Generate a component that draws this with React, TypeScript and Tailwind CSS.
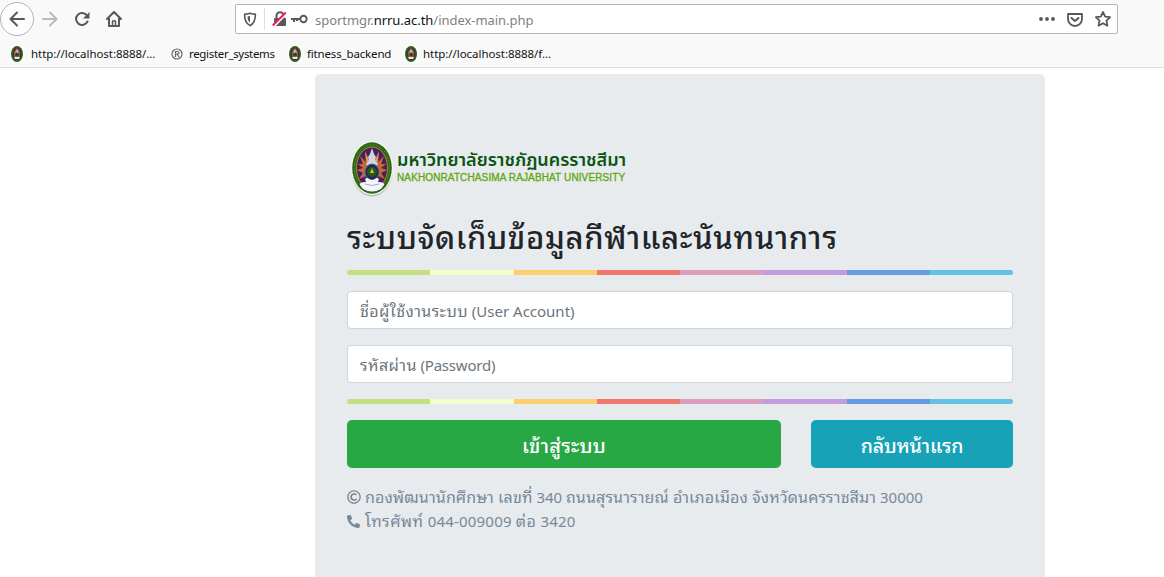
import React from 'react';
import { FaPhone, FaRegCopyright } from 'react-icons/fa';

function Crest({ className }: { className: string }) {
  return (
    <svg viewBox="0 0 42 56" className={className}>
      <ellipse cx="21" cy="29" rx="20.5" ry="26.5" fill="#b9bdb9" />
      <ellipse cx="21" cy="27" rx="21" ry="27" fill="#f4faee" />
      <ellipse cx="21" cy="27" rx="19.8" ry="25.8" fill="#2c6417" />
      <ellipse cx="21" cy="27" rx="17.6" ry="23.2" fill="none" stroke="#60a22b" strokeWidth="1" strokeDasharray="1.3 1.2" />
      <ellipse cx="21" cy="27" rx="15.6" ry="21" fill="#46205f" stroke="#c28b2b" strokeWidth=".9" />
      <path d="M21 27 9 15l3 8-5 0 5 4-6 2 6 3-4 6 7-3 6 3 6-3 7 3-4-6 6-3-6-2 5-4h-5l3-8z" fill="#c96a35" />
      <path d="M21 26 14 10l1 11zM21 26l7-16-1 11z" fill="#e99a47" />
      <path d="m21 7 2 6 2 3-1 3 3 4-2 3h-8l-2-3 3-4-1-3 2-3z" fill="#d5d6e5" />
      <ellipse cx="21" cy="31" rx="7" ry="8" fill="#2a2350" stroke="#4a5f9a" strokeWidth="1.2" />
      <circle cx="21" cy="31" r="5" fill="#20591f" />
      <path d="m21 27 2 5h-4z" fill="#e1b72c" />
      <path d="M14 38q2-2 4 0 3 2 6 0 2-2 4 0l-1 3q7 0 6 3l-3 4q-9 5-18 0l-3-4q-1-3 6-3z" fill="#f6f4fc" />
      <path d="M14 43q7 3 14 0" fill="none" stroke="#9b91bd" strokeWidth=".8" />
    </svg>
  );
}

function MiniCrest() {
  return (
    <svg viewBox="0 0 14 16" className="h-4 w-3.5 shrink-0">
      <rect width="14" height="16" fill="#fff" />
      <ellipse cx="7" cy="8" rx="6" ry="8" fill="#2d6119" />
      <ellipse cx="7" cy="8" rx="4.2" ry="6" fill="#4d214f" />
      <path d="M4 8q0-4 3-5 3 1 3 5l-1 4H5z" fill="#bd602d" />
      <path d="M6 5 7 2l1 3 1 2H5z" fill="#bcb7ce" />
      <circle cx="7" cy="8.5" r="2" fill="#294837" />
      <path d="M4 11h6l-1 2H5z" fill="#e8e5ee" />
    </svg>
  );
}

const stripes = ['bg-[#c4e17f]', 'bg-[#f7fdca]', 'bg-[#fecf71]', 'bg-[#f0776c]', 'bg-[#db9dbe]', 'bg-[#c49cde]', 'bg-[#669ae1]', 'bg-[#62c2e4]'];

function Rainbow() {
  return (
    <div className="flex h-[5px] w-full overflow-hidden rounded-[5px]">
      {stripes.map((c) => <div key={c} className={`flex-1 ${c}`} />)}
    </div>
  );
}

function Thai({ children }: { children: string }) {
  return <span className="text-[16px] tracking-[0.12px]">{children}</span>;
}

function Field({ thai, latin, tracking }: { thai: string; latin: string; tracking: string }) {
  return (
    <div role="textbox" className="mt-4 flex h-[38px] w-full items-center rounded border border-[#ced4da] bg-white px-3 pt-px text-[15px] text-[#6c757d]">
      <div className="whitespace-pre leading-6"><span className="text-[16px] tracking-[0.4px]">{thai}</span><span className={tracking}>{' ' + latin}</span></div>
    </div>
  );
}

function Toolbar() {
  return (
    <div className="flex h-[38px] items-center text-[#58585a]">
      <div className="flex h-[34px] w-[34px] shrink-0 items-center justify-center rounded-full border border-[#b4b4b4] bg-[#fdfdfd]">
        <svg viewBox="0 0 16 16" className="h-4 w-4" fill="none" stroke="currentColor" strokeWidth="2" strokeLinecap="round" strokeLinejoin="round"><path d="M15 8H1.5M8 1.5 1.5 8 8 14.500" /></svg>
      </div>
      <svg viewBox="0 0 16 16" className="ml-2 h-4 w-4 text-[#bababb]" fill="none" stroke="currentColor" strokeWidth="2" strokeLinecap="round" strokeLinejoin="round"><path d="M1 8h13.500M8 1.500 14.500 8 8 14.500" /></svg>
      <svg viewBox="0 0 16 16" className="ml-4 h-4 w-4" fill="none" stroke="currentColor" strokeWidth="2" strokeLinecap="round"><path d="M13.500 10.500A6 6 0 1 1 13 4.500" /><path d="M15.500 1v6.500H9z" fill="currentColor" stroke="none" /></svg>
      <svg viewBox="0 0 16 16" className="ml-4 h-4 w-4" fill="none" stroke="currentColor" strokeWidth="2" strokeLinecap="round" strokeLinejoin="round"><path d="m1 8 7-7 7 7M3 7v8h10V7" /><path d="M6.500 15v-5h3v5" strokeWidth="1.500" /></svg>
      <div className="ml-[113px] flex h-[30px] w-[883px] items-center rounded-[2px] border border-[#b7b7b7] bg-white">
        <svg viewBox="0 0 14 15" className="ml-[7px] h-[15px] w-3.5" fill="none" stroke="currentColor"><path d="M7 1.200q2.500.9 5 .9.400.1.400.6c0 6-1.400 8.800-5.400 10.900C3 11.500 1.600 8.700 1.600 2.700q0-.5.400-.6 2.500 0 5-.9Z" strokeWidth="1.600" /><path d="M7 4v6.700C5.300 9.300 4.600 7.500 4.500 4.500z" fill="currentColor" stroke="none" /></svg>
        <div className="ml-[7px] h-[22px] w-px bg-[#dfdfdf]" />
        <svg viewBox="0 0 15 16" className="ml-[7px] h-4 w-[15px]"><path d="M4.500 7V4.700a3.500 3.500 0 0 1 7 0V7" fill="none" stroke="#58585a" strokeWidth="2" /><rect x="2" y="7" width="12" height="8" rx="1" fill="#58585a" /><path d="m1.500 16 13-13.500" stroke="#fff" strokeWidth="2" /><path d="m.8 14.500 13-13" stroke="#f21d59" strokeWidth="2" /></svg>
        <svg viewBox="0 0 17 10" className="ml-[4px] h-2.5 w-[17px]"><circle cx="12.500" cy="5" r="3.200" fill="none" stroke="currentColor" strokeWidth="1.900" /><path d="M0 4h9v2H7v1H5V6H4v2H2V6H0z" fill="currentColor" /></svg>
        <div className="ml-[7px] whitespace-nowrap pt-0.5 text-[13px] leading-5 tracking-[-0.04px] text-[#818181]">sportmgr.<span className="text-[#111]">nrru.ac.th</span>/index-main.php</div>
        <div className="ml-auto mr-[6px] flex items-center gap-3">
          <svg viewBox="0 0 16 4" className="h-1 w-4" fill="currentColor"><circle cx="2" cy="2" r="1.900" /><circle cx="8" cy="2" r="1.900" /><circle cx="14" cy="2" r="1.900" /></svg>
          <svg viewBox="0 0 16 15" className="h-[15px] w-4" fill="none" stroke="currentColor" strokeLinecap="round" strokeLinejoin="round"><path d="M1 2h14v5a7 7 0 0 1-14 0z" strokeWidth="1.800" /><path d="m4.500 6 3.500 3 3.500-3" strokeWidth="2" /></svg>
          <svg viewBox="0 0 16 16" className="h-4 w-4" fill="none" stroke="currentColor" strokeWidth="1.800" strokeLinejoin="round"><path d="m8 1 2.200 4.600 4.900.6-3.600 3.500.9 5L8 12.200l-4.400 2.500.9-5L.9 6.200l4.900-.6z" /></svg>
        </div>
      </div>
    </div>
  );
}

export default function App() {
  return (
    <div className="flex h-[577px] w-[1164px] flex-col overflow-hidden bg-white font-['Noto_Sans','Noto_Sans_Thai_Looped','Noto_Sans_Thai',sans-serif]">
      <header className="h-[68px] shrink-0 border-b border-[#e0e0e1] bg-[#f9f9fa]">
        <Toolbar />
        <nav className="flex h-[30px] items-center whitespace-nowrap pl-2.5 pt-px text-[11.5px] text-[#111]">
          <div className="flex w-[161px] items-center gap-[7px]"><MiniCrest /><span className="tracking-[-0.05px]">http://localhost:8888/...</span></div>
          <div className="flex w-[117px] items-center gap-[6px]">
            <svg viewBox="0 0 12 12" className="h-3 w-3" fill="none" stroke="#666" strokeWidth="1.2"><circle cx="6" cy="6" r="5" /><path d="M4.500 9V3.500h2q1.500 0 1.500 1.300T6.500 6h-2M6 6l2 3" /></svg>
            <span className="tracking-[-0.32px]">register_systems</span>
          </div>
          <div className="flex w-[116px] items-center gap-[5px]"><MiniCrest /><span className="tracking-[-0.16px]">fitness_backend</span></div>
          <div className="flex items-center gap-[5px]"><MiniCrest /><span className="tracking-[-0.05px]">http://localhost:8888/f...</span></div>
        </nav>
      </header>
      <main className="ml-[315px] mt-1.5 h-[520px] w-[730px] shrink-0 rounded-[5px] bg-[#e7ebee] px-8 pt-[67px]">
        <div className="flex h-14 items-start pl-1">
          <Crest className="h-14 w-[42px]" />
          <div className="ml-1 whitespace-nowrap pt-[9px]">
            <div className="h-[21px] font-['Noto_Sans_Thai',sans-serif] text-[18px] font-semibold leading-[22px] text-[#0b5514]">มหาวิทยาลัยราชภัฏนครราชสีมา</div>
            <div className="font-['Liberation_Sans',sans-serif] text-[10px] leading-[14px] tracking-[0.12px] text-[#62a60c] [-webkit-text-stroke:0.3px_#62a60c]">NAKHONRATCHASIMA RAJABHAT UNIVERSITY</div>
          </div>
        </div>
        <h1 className="mt-[21px] h-[38px] whitespace-nowrap text-[31px] font-medium leading-[38px] tracking-[0.6px] text-[#212529]">ระบบจัดเก็บข้อมูลกีฬาและนันทนาการ</h1>
        <div className="mt-[14px]"><Rainbow /></div>
        <Field thai="ชื่อผู้ใช้งานระบบ" latin="(User Account)" tracking="tracking-normal" />
        <Field thai="รหัสผ่าน" latin="(Password)" tracking="tracking-[-0.2px]" />
        <div className="mt-4"><Rainbow /></div>
        <div className="mt-4 flex h-12 justify-between text-xl font-medium text-white">
          <button className="w-[434px] rounded-[5px] bg-[#28a745] pt-[3px] tracking-[0.2px]">เข้าสู่ระบบ</button>
          <button className="w-[202px] rounded-[5px] bg-[#17a2b8] pt-[3px] text-[19.5px] tracking-[-0.1px]">กลับหน้าแรก</button>
        </div>
        <footer className="mt-[17px] whitespace-nowrap text-[15px] leading-6 text-[#778899]">
          <div className="flex h-6 items-center gap-1"><FaRegCopyright className="h-3.5 w-3.5" /><span><Thai>กองพัฒนานักศึกษา เลขที่</Thai> 340 <Thai>ถนนสุรนารายณ์ อำเภอเมือง จังหวัดนครราชสีมา</Thai> 30000</span></div>
          <div className="flex h-6 items-center gap-[5px]"><FaPhone className="h-[13px] w-[13px] -scale-x-100" /><span className="tracking-[0.2px]"><span className="text-[16px] tracking-[0.5px]">โทรศัพท์</span> 044-009009 <span className="text-[16px] tracking-[0.5px]">ต่อ</span> 3420</span></div>
        </footer>
      </main>
    </div>
  );
}
